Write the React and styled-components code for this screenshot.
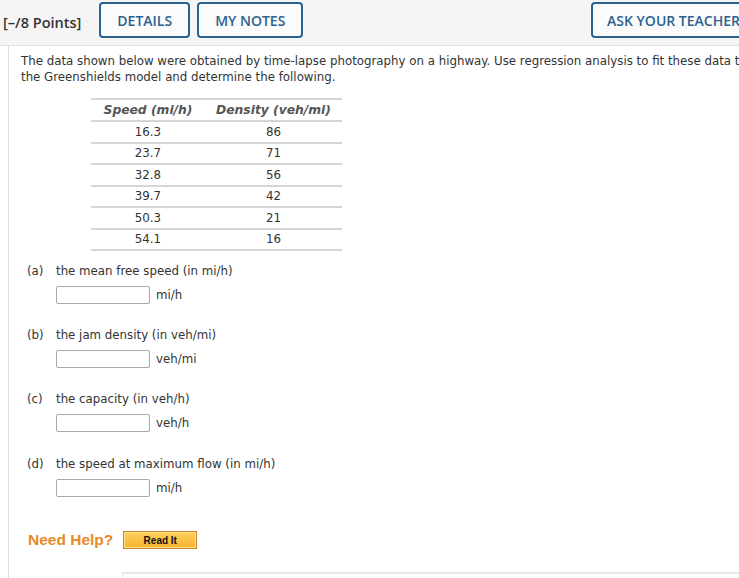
import React from 'react'
import styled, { createGlobalStyle } from 'styled-components'

const GlobalStyle = createGlobalStyle`
  html, body {
    margin: 0;
    padding: 0;
    background: #fff;
    overflow: hidden;
  }
`

const Page = styled.div`
  width: 739px;
  height: 578px;
  overflow: hidden;
  font-family: "DejaVu Sans", Verdana, sans-serif;
  color: #333;
`

const Header = styled.div`
  width: 756px;
  height: 46px;
  box-sizing: border-box;
  background: #f5f5f5;
  border-bottom: 1px solid #e2e2e2;
  display: flex;
  align-items: center;
  padding-left: 3px;
  white-space: nowrap;
`

const Points = styled.span`
  font-family: "Open Sans", sans-serif;
  font-weight: 600;
  font-size: 14.5px;
  color: #333;
  margin-right: 18px;
`

const ButtonGroup = styled.div`
  display: flex;
  gap: 7px;
`

const HeadButton = styled.button`
  height: 36px;
  box-sizing: border-box;
  padding: 0 ${p => p.$pad || 14}px;
  border: 2px solid #2b628f;
  border-radius: 4px;
  background: #fbfbfb;
  color: #2b628f;
  font-family: "Open Sans", sans-serif;
  font-weight: 600;
  font-size: 14px;
  margin: -5px 0 0 ${p => p.$push ? 'auto' : '0'};
  flex-shrink: 0;
`

const Body = styled.div`
  margin-left: 8px;
  border-left: 1px solid #dcdcdc;
  padding: 7px 0 0 12px;
  height: 600px;
`

const Intro = styled.p`
  margin: 0;
  font-size: 11.8px;
  line-height: 16px;
  white-space: nowrap;
`

const DataTable = styled.table`
  margin: 13px 0 0 70px;
  border-collapse: collapse;
  font-size: 11.8px;
  border-top: 2px solid #d6d6d6;
`

const HeadCell = styled.th`
  font-weight: bold;
  font-style: italic;
  color: #555;
  height: 20px;
  padding: 0;
  text-align: center;
  border-bottom: 2px solid #d6d6d6;
  font-size: 12.3px;
`

const Cell = styled.td`
  height: 19.5px;
  line-height: 14px;
  text-align: center;
  padding: 0;
  width: ${p => p.$w}px;
  border-bottom: 2px solid #d6d6d6;
`

const Part = styled.div`
  margin-top: ${p => p.$top}px;
  font-size: 11.8px;
`

const PartLabel = styled.div`
  display: flex;
  line-height: 16px;
  padding-left: 6px;
`

const Letter = styled.span`
  width: 29px;
`

const AnswerRow = styled.div`
  display: flex;
  align-items: center;
  margin: 7px 0 0 35px;
  gap: 6px;
  line-height: 16px;
`

const AnswerBox = styled.input`
  width: 94px;
  height: 18px;
  box-sizing: border-box;
  border: 1px solid #a9a9a9;
  border-radius: 2px;
  background: #fff;
  margin: 0;
`

const HelpRow = styled.div`
  display: flex;
  align-items: center;
  margin: 34px 0 0 7px;
  gap: 10px;
`

const HelpText = styled.span`
  font-family: "Liberation Sans", Arial, sans-serif;
  font-weight: bold;
  font-size: 15.5px;
  color: #e8892a;
`

const ReadIt = styled.button`
  width: 74px;
  height: 18px;
  box-sizing: border-box;
  border: 1px solid #c9822f;
  box-shadow: inset 0 0 0 1px #fde38a;
  background: linear-gradient(#fdd25c, #f9b12e);
  font-family: "Liberation Sans", Arial, sans-serif;
  font-weight: bold;
  font-size: 10px;
  color: #111;
  padding: 0;
`

const NextBox = styled.div`
  margin: 23px 0 0 101px;
  height: 20px;
  border-top: 2px solid #e6e6e6;
  border-left: 1px solid #e6e6e6;
`

const rows = [
  ['16.3', '86'],
  ['23.7', '71'],
  ['32.8', '56'],
  ['39.7', '42'],
  ['50.3', '21'],
  ['54.1', '16'],
]

const parts = [
  ['(a)', 'the mean free speed (in mi/h)', 'mi/h', 12],
  ['(b)', 'the jam density (in veh/mi)', 'veh/mi', 23],
  ['(c)', 'the capacity (in veh/h)', 'veh/h', 23],
  ['(d)', 'the speed at maximum flow (in mi/h)', 'mi/h', 24],
]

const App = () => {
  return (
    <Page>
      <GlobalStyle />
      <Header>
        <Points>[–/8 Points]</Points>
        <ButtonGroup>
          <HeadButton $pad={16}>DETAILS</HeadButton>
          <HeadButton $pad={16}>MY NOTES</HeadButton>
        </ButtonGroup>
        <HeadButton $push $pad={14}>ASK YOUR TEACHER</HeadButton>
      </Header>
      <Body>
        <Intro>
          The data shown below were obtained by time-lapse photography on a highway. Use regression analysis to fit these data to
          <br />
          the Greenshields model and determine the following.
        </Intro>
        <DataTable>
          <thead>
            <tr>
              <HeadCell>Speed (mi/h)</HeadCell>
              <HeadCell>Density (veh/mi)</HeadCell>
            </tr>
          </thead>
          <tbody>
            {rows.map(([s, d]) => (
              <tr key={s}>
                <Cell $w={114}>{s}</Cell>
                <Cell $w={137}>{d}</Cell>
              </tr>
            ))}
          </tbody>
        </DataTable>
        {parts.map(([l, q, u, top]) => (
          <Part key={l} $top={top}>
            <PartLabel>
              <Letter>{l}</Letter>
              <span>{q}</span>
            </PartLabel>
            <AnswerRow>
              <AnswerBox type="text" />
              <span>{u}</span>
            </AnswerRow>
          </Part>
        ))}
        <HelpRow>
          <HelpText>Need Help?</HelpText>
          <ReadIt>Read It</ReadIt>
        </HelpRow>
        <NextBox />
      </Body>
    </Page>
  )
}

export default App
